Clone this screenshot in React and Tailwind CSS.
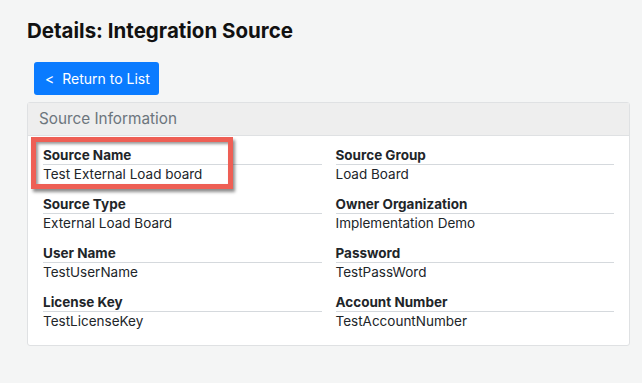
const fields = [
  { label: "Source Name", value: "Test External Load board", highlight: true },
  { label: "Source Group", value: "Load Board" },
  { label: "Source Type", value: "External Load Board" },
  { label: "Owner Organization", value: "Implementation Demo" },
  { label: "User Name", value: "TestUserName" },
  { label: "Password", value: "TestPassWord" },
  { label: "License Key", value: "TestLicenseKey" },
  { label: "Account Number", value: "TestAccountNumber" },
];

function Field({ label, value, highlight }) {
  return (
    <div className="relative mb-3">
      {highlight && (
        <div className="absolute left-[-12px] top-[-9px] w-[202px] h-[52px] border-[5px] border-[#ee5f55] shadow-[2px_3px_3px_rgba(0,0,0,0.45),inset_2px_2px_3px_rgba(0,0,0,0.4)]" />
      )}
      <div className="text-[13.5px] leading-[18px] font-bold text-[#212529] border-b border-[#d5d9dd]">
        {label}
      </div>
      <div className="text-[13.5px] leading-[18px] text-[#212529]">{value}</div>
    </div>
  );
}

export default function App() {
  return (
    <div
      className="w-[642px] h-[383px] bg-[#f4f5f5] pt-[19px] px-[27px]"
      style={{ fontFamily: "Inter, 'Liberation Sans', sans-serif" }}
    >
      <h1 className="text-[20.5px] leading-[24px] font-bold text-[#111]">
        Details: Integration Source
      </h1>
      <div className="pl-[7px] mt-[19px]">
        <button className="h-[33px] w-[125px] rounded-[3px] bg-[#0a7bff] text-white text-[14px] text-left pl-[11px]">
          <span className="mr-[8px]">&lt;</span>Return to List
        </button>
      </div>
      <div className="mt-[7px] w-[603px] bg-white border border-[#dfe1e3] rounded-[3px]">
        <div className="h-[33px] bg-[#eeeeee] border-b border-[#dfe1e3] px-[11px] flex items-center text-[15.3px] text-[#6c757d]">
          Source Information
        </div>
        <div className="grid grid-cols-2 gap-x-[14px] px-[15px] pt-[10px] pb-[3px]">
          {fields.map((f) => (
            <Field key={f.label} {...f} />
          ))}
        </div>
      </div>
    </div>
  );
}
